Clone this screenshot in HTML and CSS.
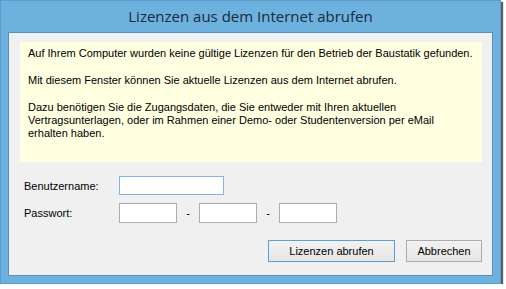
FILE: index.html
```html
<!DOCTYPE html>
<html lang="de">
  <head>
    <meta charset="UTF-8" />
    <title>Lizenzen aus dem Internet abrufen</title>
    <link rel="stylesheet" href="styles.css">
  </head>
  <body>
    <div class="window">
      <div class="titlebar">Lizenzen aus dem Internet abrufen</div>
      <div class="client">
        <div class="info">
          <p>Auf Ihrem Computer wurden keine gültige Lizenzen für den Betrieb der Baustatik gefunden.</p>
          <p>Mit diesem Fenster können Sie aktuelle Lizenzen aus dem Internet abrufen.</p>
          <p>Dazu benötigen Sie die Zugangsdaten, die Sie entweder mit Ihren aktuellen Vertragsunterlagen, oder im Rahmen einer Demo- oder Studentenversion per eMail erhalten haben.</p>
        </div>

        <div class="form">
          <div class="row">
            <label for="user">Benutzername:</label>
            <input type="text" id="user" class="field wide focused" />
          </div>
          <div class="row">
            <label for="pw1">Passwort:</label>
            <input type="text" id="pw1" class="field short" />
            <span class="dash">-</span>
            <input type="text" class="field short" />
            <span class="dash">-</span>
            <input type="text" class="field short" />
          </div>
        </div>

        <div class="buttons">
          <button class="btn default">Lizenzen abrufen</button>
          <button class="btn cancel">Abbrechen</button>
        </div>
      </div>
    </div>
  </body>
</html>
```

FILE: styles.css
```css
* {
  box-sizing: border-box;
  margin: 0;
  padding: 0;
}
body {
  background: #ffffff;
  font-family: "Liberation Sans", Arial, sans-serif;
  font-size: 11px;
  color: #000;
}
.window {
  width: 501px;
  height: 284px;
  background: #6db1de;
  border: 1px solid #5a9ccc;
  box-shadow: 2px 2px 1px rgba(40, 40, 40, 0.75);
  display: flex;
  flex-direction: column;
}
.titlebar {
  height: 31px;
  text-align: center;
  font-family: "Open Sans", "Noto Sans", sans-serif;
  font-size: 15px;
  line-height: 30px;
  color: #1a2a3a;
}
.client {
  flex: 1;
  margin: 0 7px 7px 7px;
  background: #f0f0f0;
  border: 1px solid #5b8fb8;
  padding: 9px 10px 13px 11px;
  display: flex;
  flex-direction: column;
}
.info {
  background: #ffffe1;
  height: 120px;
  padding: 5px 8px 0 8px;
  line-height: 13px;
}
.info p {
  margin-bottom: 14px;
}
.form {
  margin-top: 14px;
  padding-left: 4px;
  display: flex;
  flex-direction: column;
  gap: 8px;
}
.row {
  display: flex;
  align-items: center;
}
.row label {
  width: 95px;
}
.field {
  height: 20px;
  border: 1px solid #abadb3;
  background: #fff;
  outline: none;
}
.field.focused {
  border-color: #7eb4ea;
}
.wide {
  width: 105px;
  height: 19px;
}
.short {
  width: 58px;
}
.dash {
  width: 22px;
  text-align: center;
}
.buttons {
  margin-top: auto;
  display: flex;
  justify-content: flex-end;
  gap: 11px;
}
.btn {
  height: 22px;
  font-family: "Liberation Sans", Arial, sans-serif;
  font-size: 11px;
  color: #000;
  background: linear-gradient(#f2f2f2, #e6e6e6);
  border: 1px solid #acacac;
}
.btn.default {
  width: 127px;
  border-color: #5e9ed6;
}
.btn.cancel {
  width: 76px;
}
```
